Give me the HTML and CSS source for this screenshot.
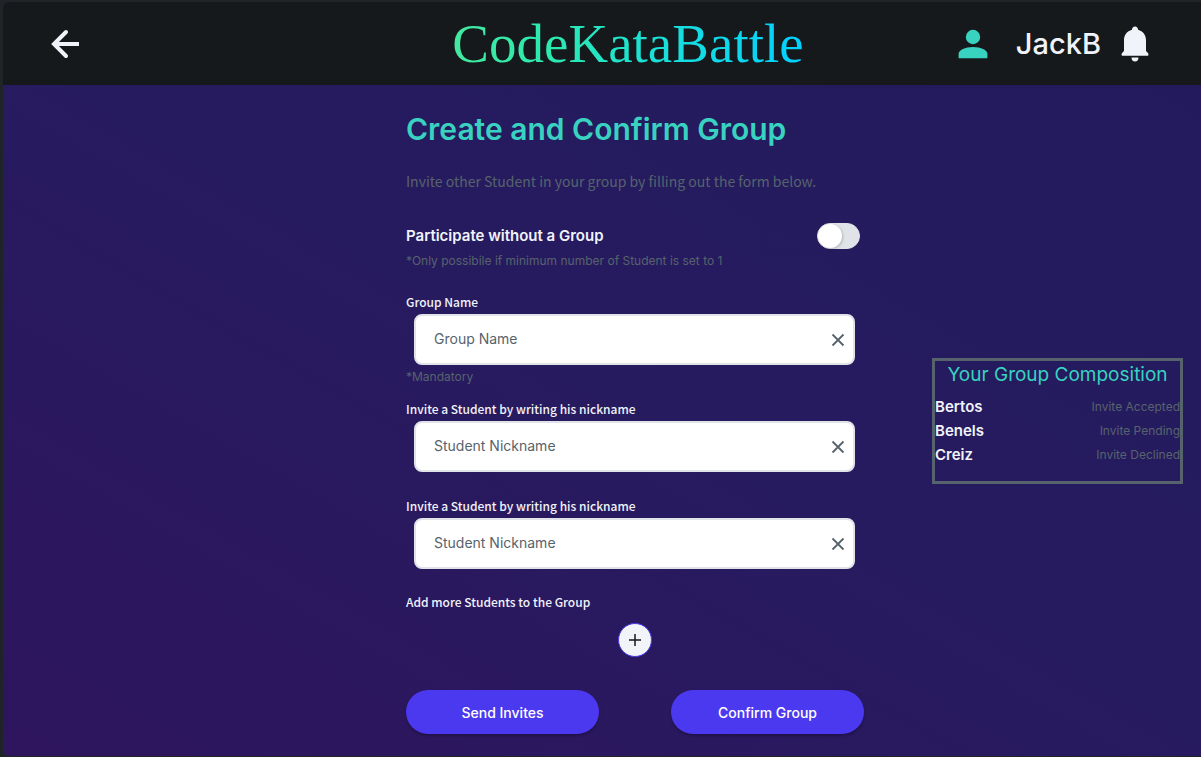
FILE: index.html
```html
<!DOCTYPE html>
<html lang="en">
<head>
<meta charset="utf-8">
<title>CodeKataBattle</title>
<link rel="stylesheet" href="styles.css">
</head>
<body>
<div class="app">
  <header class="topbar">
    <a class="back" href="#" aria-label="Back">
      <svg width="32" height="32" viewBox="0 0 32 32" fill="none" stroke="currentColor" stroke-width="4" stroke-linecap="round"><path d="M30 16H6" stroke-linecap="butt"/><path d="M17 4 5 16l12 12"/></svg>
    </a>
    <span class="logo">CodeKataBattle</span>
    <div class="account">
      <svg class="user" width="30" height="30" viewBox="0 0 30 30" fill="currentColor"><circle cx="15" cy="8" r="7.2"/><path d="M.6 29.2v-4.4C.6 21 7 18 15 18s14.400 3 14.400 6.800v4.400z"/></svg>
      <span class="username">JackB</span>
      <button class="bell" type="button" aria-label="Notifications">
        <svg width="28" height="36" viewBox="0 0 28 36" fill="currentColor"><path d="M14 .5c1.900 0 2.900 1.300 3.100 3.300C22 5.200 25 9 25 14v10.500c0 1.500 2.500 1.800 2.500 4 0 .8-.5 1.300-1.300 1.300H1.800c-.8 0-1.300-.5-1.300-1.300 0-2.200 2.500-2.500 2.500-4V14c0-5 3-8.800 7.900-10.200C11.100 1.800 12.100.5 14 .5zM10.500 31.500h7c0 2.400-1.400 4-3.500 4s-3.500-1.600-3.500-4z"/></svg>
      </button>
    </div>
  </header>
  <main class="content">
    <form class="form">
      <h1 class="title">Create and Confirm Group</h1>
      <p class="intro">Invite other Student in your group by filling out the form below.</p>
      <div class="solo">
        <label class="solo-label" for="solo">Participate without a Group</label>
        <input class="toggle" id="solo" type="checkbox" role="switch">
      </div>
      <p class="note solo-note">*Only possibile if minimum number of Student is set to 1</p>
      <div class="field">
        <label class="label" for="group">Group Name</label>
        <div class="box">
          <input class="input" id="group" type="text" placeholder="Group Name">
          <button class="clear" type="button" aria-label="Clear"><svg width="14" height="14" viewBox="0 0 14 14" fill="none" stroke="currentColor" stroke-width="1.800"><path d="m1.500 1.500 11 11M12.500 1.500l-11 11"/></svg></button>
        </div>
        <p class="note hint">*Mandatory</p>
      </div>
      <div class="field">
        <label class="label" for="student1">Invite a Student by writing his nickname</label>
        <div class="box">
          <input class="input" id="student1" type="text" placeholder="Student Nickname">
          <button class="clear" type="button" aria-label="Clear"><svg width="14" height="14" viewBox="0 0 14 14" fill="none" stroke="currentColor" stroke-width="1.800"><path d="m1.500 1.500 11 11M12.500 1.500l-11 11"/></svg></button>
        </div>
      </div>
      <div class="field spaced">
        <label class="label" for="student2">Invite a Student by writing his nickname</label>
        <div class="box">
          <input class="input" id="student2" type="text" placeholder="Student Nickname">
          <button class="clear" type="button" aria-label="Clear"><svg width="14" height="14" viewBox="0 0 14 14" fill="none" stroke="currentColor" stroke-width="1.800"><path d="m1.500 1.500 11 11M12.500 1.500l-11 11"/></svg></button>
        </div>
      </div>
      <div class="field more">
        <span class="label" id="add-label">Add more Students to the Group</span>
        <button class="add" type="button" aria-labelledby="add-label"><svg width="12" height="12" viewBox="0 0 12 12" fill="none" stroke="currentColor" stroke-width="1.500"><path d="M6 0v12M0 6h12"/></svg></button>
      </div>
      <div class="actions">
        <button class="action" type="button">Send Invites</button>
        <button class="action" type="submit">Confirm Group</button>
      </div>
    </form>
    <aside class="group">
      <h2 class="group-title">Your Group Composition</h2>
      <ul class="members">
        <li class="member"><span class="name">Bertos</span><span class="note">Invite Accepted</span></li>
        <li class="member"><span class="name">Benels</span><span class="note">Invite Pending</span></li>
        <li class="member"><span class="name">Creiz</span><span class="note">Invite Declined</span></li>
      </ul>
    </aside>
  </main>
</div>
</body>
</html>
```

FILE: styles.css
```css
* { box-sizing: border-box; }
body {
  margin: 0;
  min-height: 100vh;
  padding: 2px 0 1px 3px;
  display: flex;
  background: #1f2428;
  color: #f0f3f9;
  font-family: Inter, "Liberation Sans", sans-serif;
}
h1, h2, p, ul { margin: 0; padding: 0; }
button { padding: 0; border: 0; background: none; color: inherit; font: inherit; cursor: pointer; }
svg { display: block; }

.app {
  flex: 1;
  display: flex;
  flex-direction: column;
  overflow: hidden;
  border-radius: 6px 0 0 6px;
  background: linear-gradient(30deg, #2e155e 0%, #271b60 50%, #211a5c 100%);
}
.topbar {
  display: grid;
  grid-template-columns: 1fr auto 1fr;
  align-items: center;
  height: 83px;
  padding: 0 52px 0 46px;
  background: #15191c;
}
.back { width: 32px; }
.back, .bell { color: #f0f3f9; }
.logo {
  margin-left: 58px;
  font: 55px/64px "Liberation Serif", serif;
  background: linear-gradient(90deg, #43e9a0 0%, #2eeaac 25%, #17dde0 65%, #00d0ff 100%);
  background-clip: text;
  -webkit-background-clip: text;
  color: transparent;
}
.account { display: flex; align-items: center; justify-content: flex-end; }
.user { color: #39d2c0; margin-right: 28px; }
.username { font-size: 29px; line-height: 36px; font-weight: 500; margin-right: 20px; }

.content {
  flex: 1;
  display: grid;
  grid-template-columns: minmax(0, 403fr) 458px minmax(0, 337fr);
}
.form { grid-column: 2; padding-top: 24px; }
.title { color: #39d2c0; font-size: 30px; line-height: 40px; font-weight: 600; }
.intro {
  margin-top: 22px;
  color: #57636c;
  font: 14px/20px "Noto Sans CJK SC", sans-serif;
}
.solo {
  margin-top: 32px;
  padding-right: 4px;
  display: flex;
  align-items: center;
  justify-content: space-between;
}
.solo-label, .name { font-size: 15px; line-height: 24px; font-weight: 600; }
.toggle {
  appearance: none;
  margin: 0;
  width: 43px;
  height: 26px;
  border-radius: 13px;
  border: 1px solid #e0e3e7;
  background: #e0e3e7;
  cursor: pointer;
}
.toggle::before {
  content: "";
  display: block;
  width: 24px;
  height: 24px;
  border-radius: 50%;
  background: #fff;
  box-shadow: 1px 1px 3px #0003;
}
.toggle:checked { background: #4b39ef; }
.toggle:checked::before { margin-left: 17px; }
.note { color: #57636c; font-size: 12px; line-height: 16px; }
.solo-note { margin: 4px 0 23px; }
.label {
  display: block;
  font: 500 12px/20px "Noto Sans CJK SC", sans-serif;
}
.box {
  margin: 2px 9px 0 8px;
  height: 51px;
  display: flex;
  align-items: center;
  padding: 0 8px 0 18px;
  border: 2px solid #e0e3e7;
  border-radius: 8px;
  background: #fff;
  color: #57636c;
}
.input {
  flex: 1;
  min-width: 0;
  height: 100%;
  padding: 0 0 2px;
  border: 0;
  outline: 0;
  background: none;
  color: #14181b;
  font: 14px Inter, sans-serif;
}
.input::placeholder { color: #57636c; opacity: 1; }
.hint { margin: 4px 0 14px; }
.spaced { margin-top: 24px; }
.more { margin-top: 23px; }
.add {
  display: flex;
  align-items: center;
  justify-content: center;
  width: 34px;
  height: 34px;
  margin: 11px auto 0;
  border: 1px solid #4b39ef;
  border-radius: 50%;
  background: #f1f4f8;
  color: #14181b;
}
.actions { display: flex; justify-content: space-between; margin: 33px 0 20px; }
.action {
  width: 193px;
  height: 44px;
  border-radius: 22px;
  background: #4b39ef;
  box-shadow: 0 2px 3px #0004;
  color: #fff;
  font-size: 14px;
  font-weight: 500;
}
.group {
  grid-column: 3;
  align-self: start;
  margin: 273px 18px 0 68px;
  min-height: 126px;
  border: 3px solid #57636c;
}
.group-title { color: #39d2c0; font-size: 19px; line-height: 28px; font-weight: 400; text-align: center; }
.members { list-style: none; margin-top: 6px; }
.member { display: flex; justify-content: space-between; align-items: center; }
```
